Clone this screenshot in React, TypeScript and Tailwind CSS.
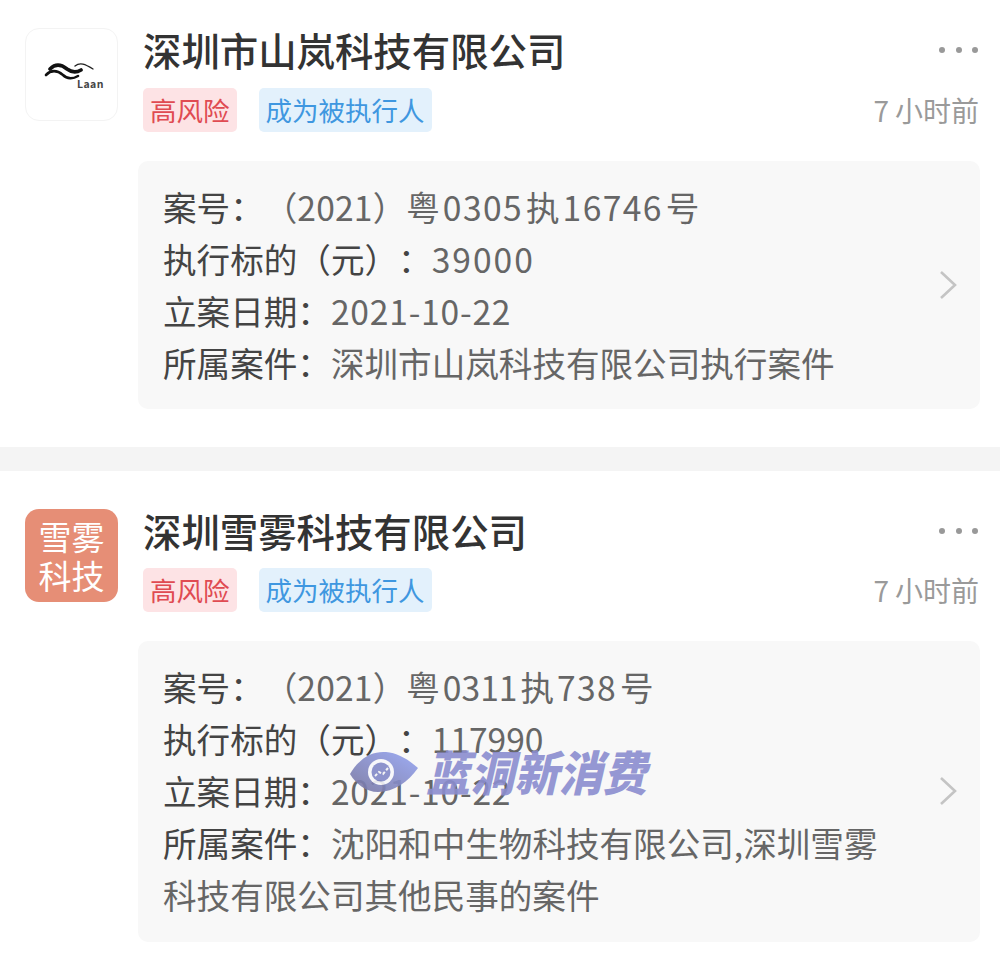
import type { ReactNode } from "react"

const font = { fontFamily: '"Noto Sans CJK SC", "Noto Sans", sans-serif' }

function LaanLogo() {
  return (
    <div className="w-[93px] h-[93px] shrink-0 rounded-[14px] border border-[#f3f3f3] bg-white relative">
      <svg className="absolute left-[18px] top-[31px]" width="52" height="22" viewBox="44 60 52 22" fill="none" strokeLinecap="round">
        <path d="M50 69C56 63 62 65 67 69C71 72 76 73 81 70" stroke="#111" strokeWidth="3.6" />
        <path d="M46 75C52 69 58 71 63 75C67 79 73 79 78 76" stroke="#111" strokeWidth="2.6" />
        <path d="M75 66C80 62 85 64 93 69" stroke="#222" strokeWidth="1.4" />
      </svg>
      <span className="absolute left-[51px] top-[48px] text-[10.5px] leading-[13px] font-bold tracking-[0.4px] text-[#444]">Laan</span>
    </div>
  )
}

function XuewuLogo() {
  return (
    <div className="w-[93px] h-[93px] shrink-0 rounded-[14px] bg-[#e68e76] flex flex-col items-center justify-center text-white text-[33px] leading-[39px]">
      <span>雪雾</span>
      <span>科技</span>
    </div>
  )
}

function Tag({ children, className }: { children: string; className: string }) {
  return (
    <span className={`h-[44px] px-[7px] rounded-[5px] flex items-center text-[26.5px] ${className}`}>
      {children}
    </span>
  )
}

// digits in the reference run wider than Noto's, with a small gap around them
function Num({ children, className }: { children: string; className: string }) {
  return <span className={`mx-[3px] ${className}`}>{children}</span>
}

function Row({ label, children }: { label: string; children: ReactNode }) {
  return (
    <p className="text-[33.6px] leading-[52px] text-[#444] [text-spacing-trim:space-all]">
      {label}
      <span className="text-[#666]">{children}</span>
    </p>
  )
}

function Chevron({ className }: { className: string }) {
  return (
    <svg className={`absolute right-[22px] ${className}`} width="20" height="30" viewBox="0 0 20 30" fill="none">
      <path d="M3 2L17 15L3 28" stroke="#c4c4c4" strokeWidth="2.6" />
    </svg>
  )
}

type CardProps = {
  logo: ReactNode
  name: string
  chevron: string
  rows: { label: string; value: ReactNode }[]
  extra?: string
  tagGap: string
}

function Card({ logo, name, rows, chevron, extra, tagGap }: CardProps) {
  return (
    <section className="bg-white pl-[25px] pr-[20px] pt-[28px]">
      <div className="flex gap-[25px]">
        {logo}
        <div className="flex-1 -mt-[2px]">
          <div className="flex justify-between items-start">
            <h2 className="text-[38.4px] leading-[46px] font-medium text-[#333]">{name}</h2>
            <div className="flex gap-[10.5px] pt-[21px] pr-[2px]">
              <i className="w-[6px] h-[6px] rounded-full bg-[#999]" />
              <i className="w-[6px] h-[6px] rounded-full bg-[#999]" />
              <i className="w-[6px] h-[6px] rounded-full bg-[#999]" />
            </div>
          </div>
          <div className={`flex items-center gap-[22px] ${tagGap}`}>
            <Tag className="bg-[#fde3e5] text-[#e04b52]">高风险</Tag>
            <Tag className="bg-[#e3f1fc] text-[#3f97e0]">成为被执行人</Tag>
            <span className="ml-auto pr-[1px] text-[28px] text-[#9a9a9a]">
              <span className="mr-[6px]">7</span>小时前
            </span>
          </div>
        </div>
      </div>
      <div className="relative ml-[113px] mt-[29px] rounded-[10px] bg-[#f8f8f8] pl-[25px] pr-[90px] pt-[20px] pb-[20px]">
        {rows.map((r) => (
          <Row key={r.label} label={r.label}>{r.value}</Row>
        ))}
        {extra && <p className="text-[33.6px] leading-[52px] text-[#666] pb-[1px]">{extra}</p>}
        <Chevron className={chevron} />
      </div>
    </section>
  )
}

export default function App() {
  return (
    <div className="w-[1000px] h-[964px] overflow-hidden bg-white relative" style={font}>
      <div className="pb-[38px]">
        <Card
          logo={<LaanLogo />}
          name="深圳市山岚科技有限公司"
          chevron="top-[109px]"
          tagGap="mt-[16px]"
          rows={[
            { label: "案号：", value: <>（<span className="tracking-[0.2px]">2021</span>）粤<Num className="tracking-[1.4px]">0305</Num>执<Num className="tracking-[1.4px]">16746</Num>号</> },
            { label: "执行标的（元）：", value: <span className="tracking-[2px]">39000</span> },
            { label: "立案日期：", value: <span className="tracking-[0.8px]">2021-10-22</span> },
            { label: "所属案件：", value: "深圳市山岚科技有限公司执行案件" },
          ]}
        />
      </div>
      <div className="h-[24px] bg-[#f4f4f4]" />
      <div className="pt-[10px]">
        <Card
          logo={<XuewuLogo />}
          name="深圳雪雾科技有限公司"
          chevron="top-[135px]"
          tagGap="mt-[15px]"
          rows={[
            { label: "案号：", value: <>（<span className="tracking-[0.2px]">2021</span>）粤<Num className="tracking-[0px]">0311</Num>执<Num className="tracking-[1.4px]">738</Num>号</> },
            { label: "执行标的（元）：", value: "117990" },
            { label: "立案日期：", value: <span className="tracking-[0.8px]">2021-10-22</span> },
            { label: "所属案件：", value: "沈阳和中生物科技有限公司,深圳雪雾" },
          ]}
          extra="科技有限公司其他民事的案件"
        />
      </div>

      {/* watermark */}
      <div className="absolute left-[346px] top-[745px] flex items-center gap-[8px] opacity-90">
        <svg width="72" height="46" viewBox="0 0 72 46">
          <defs>
            <linearGradient id="eye" x1="0" y1="1" x2="1" y2="0">
              <stop offset="0" stopColor="#77759f" />
              <stop offset="1" stopColor="#94a4f4" />
            </linearGradient>
          </defs>
          <path d="M4 27C14 10 27 4 40 5C52 6 63 13 72 21C62 35 48 45 32 45C20 45 10 37 4 27Z" fill="url(#eye)" />
          <circle cx="35" cy="25" r="13" fill="#f7f7fb" />
          <circle cx="35" cy="25" r="9.5" fill="#8289c8" />
          <path d="M29 29L33 25L37 27L42 21" stroke="#f4f4f4" strokeWidth="2" strokeDasharray="3 2" fill="none" />
        </svg>
        <span className="text-[44px] leading-[50px] font-black italic scale-y-[1.08] text-[#8b8dcf] tracking-[0.2px]">蓝洞新消费</span>
      </div>
    </div>
  )
}
